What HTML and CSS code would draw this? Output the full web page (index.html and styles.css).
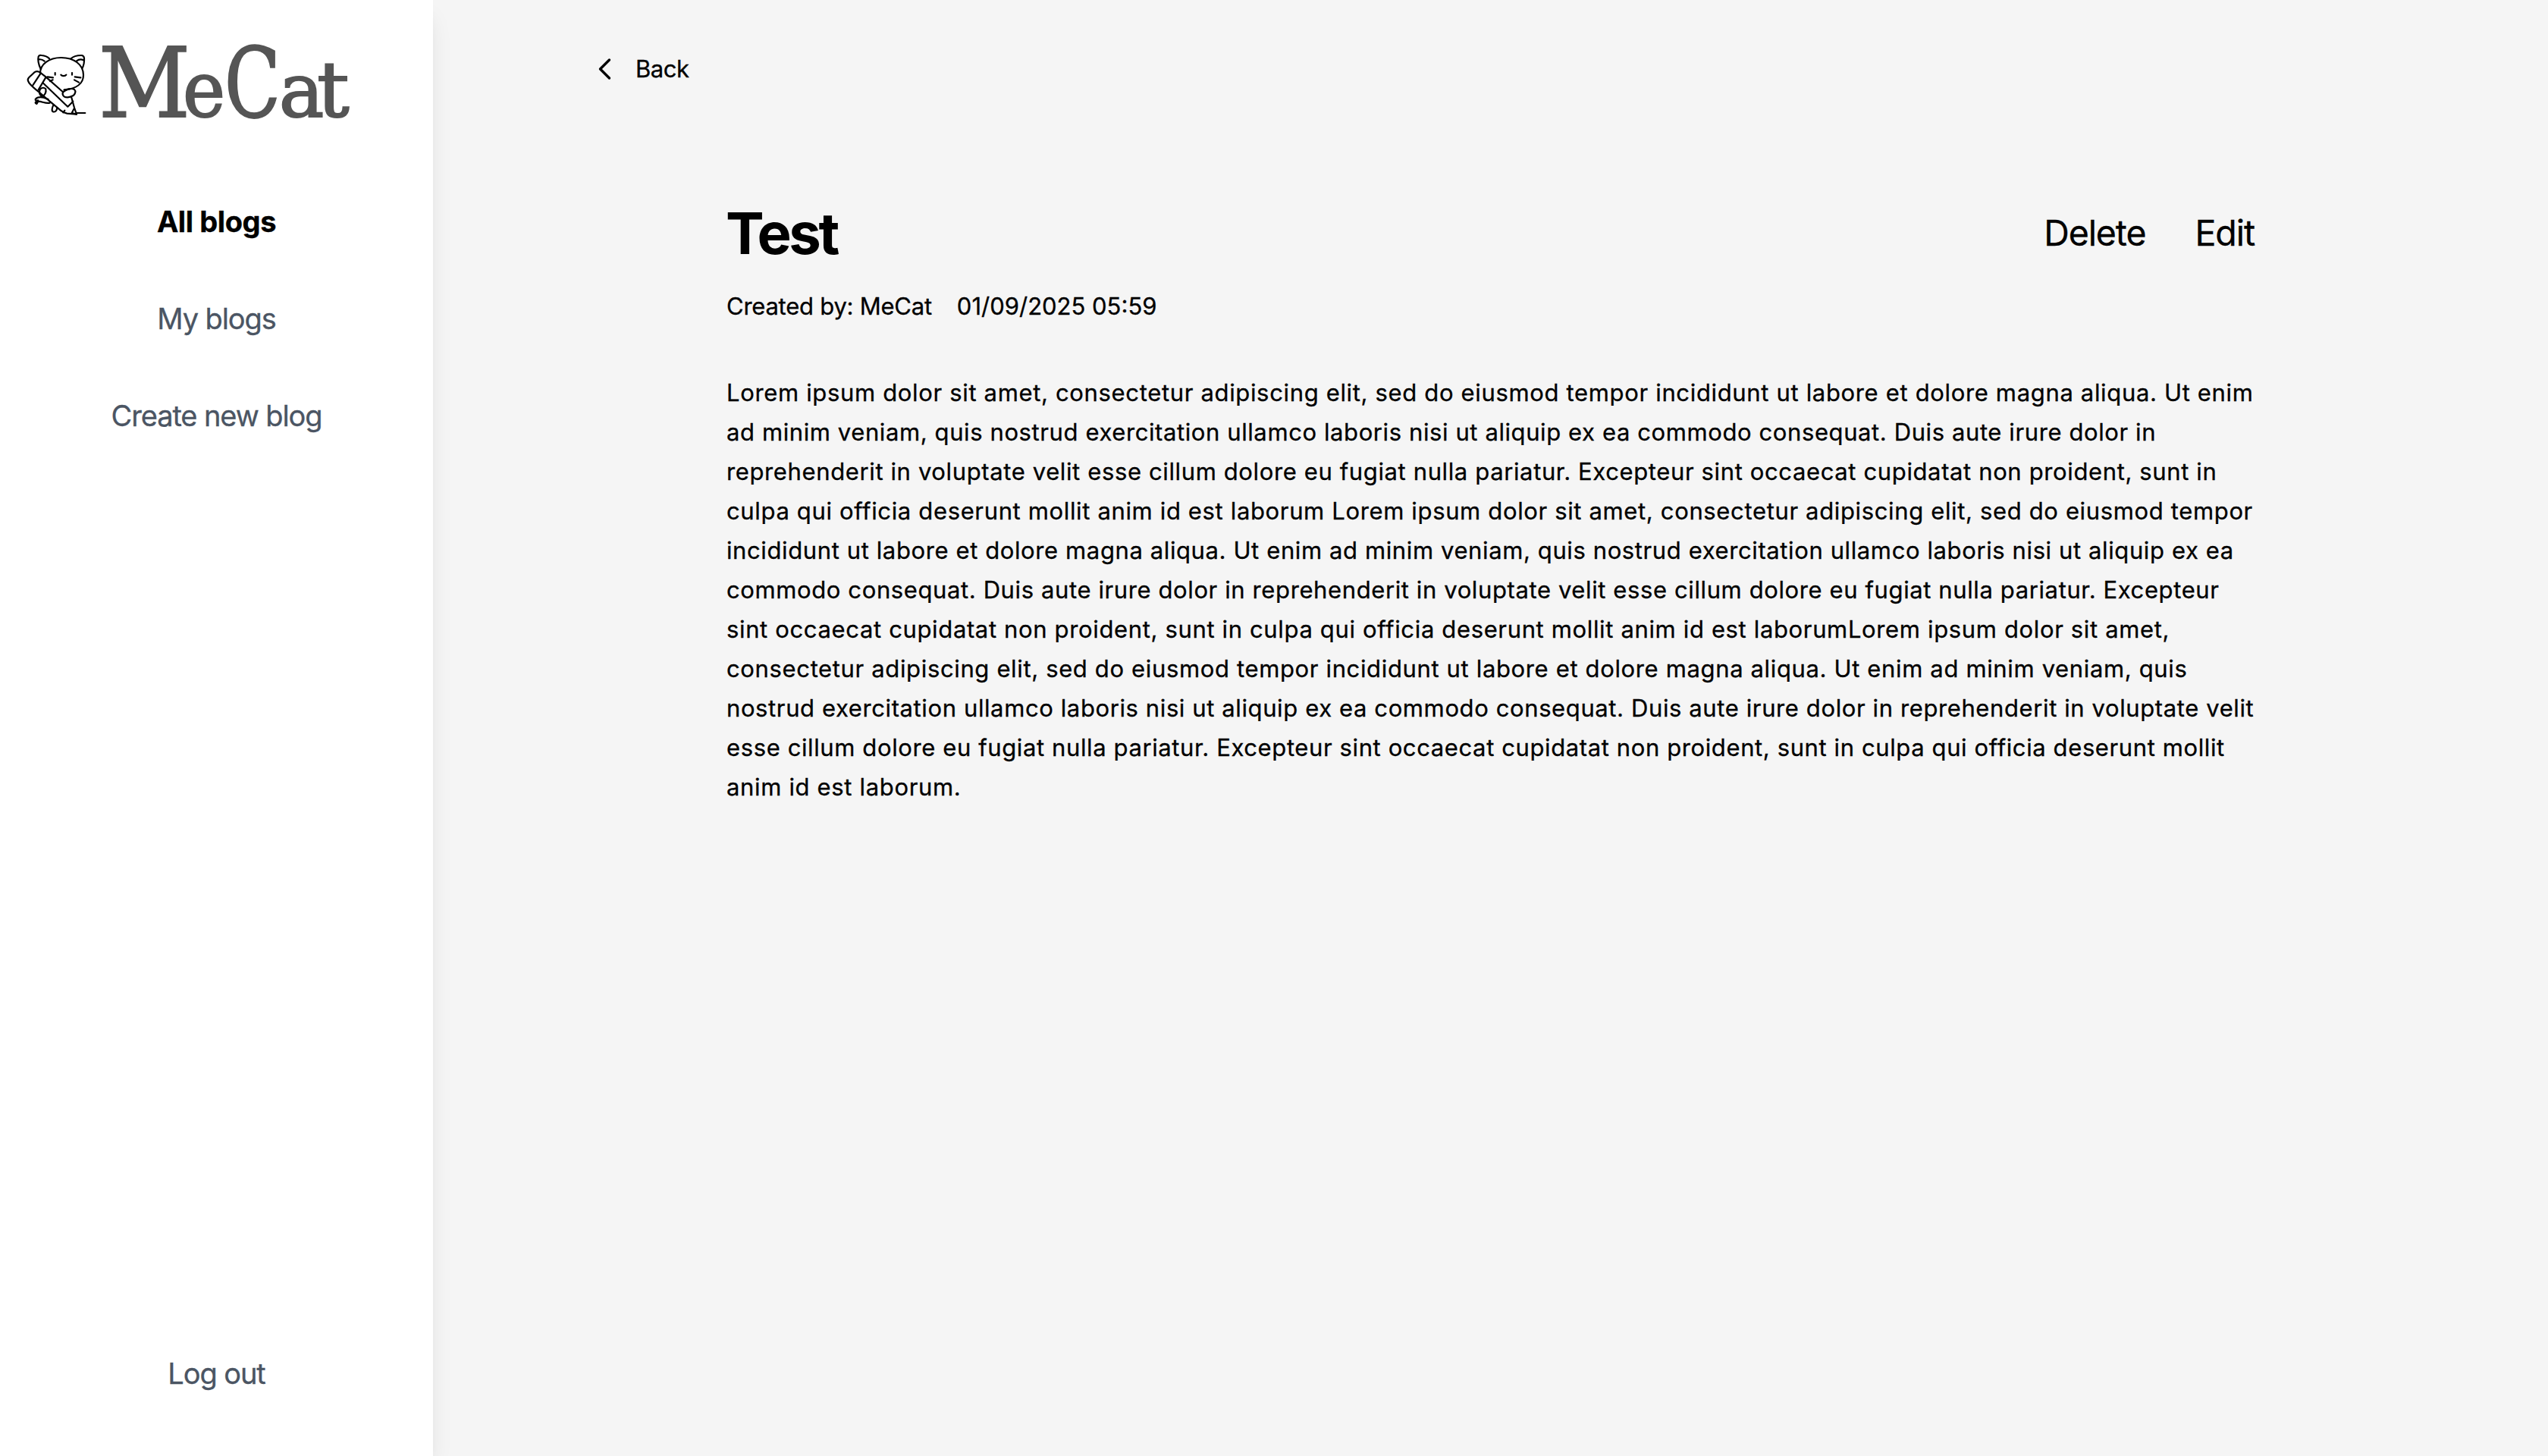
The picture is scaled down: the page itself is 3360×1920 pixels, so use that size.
FILE: index.html
```html
<!DOCTYPE html>
<html lang="en">
<head>
<meta charset="utf-8">
<title>MeCat</title>
<link rel="stylesheet" href="styles.css">
</head>
<body>
<div class="app">
  <aside class="sidebar">
    <div class="brand">
      <svg class="brand-cat" viewBox="0 0 330 360" width="110" height="120" aria-hidden="true">
        <path d="M101 123C92 103 89 86 92 74C94 69 98 68 104 69C117 70 128 74 135 82"/>
        <path d="M95 85C103 84 110 87 116 92"/>
        <path d="M221 82C230 72 245 69 262 69C269 69 272 73 273 80C274 95 272 108 265 121"/>
        <path d="M243 91C251 85 260 83 270 88"/>
        <path d="M99 140C99 104 133 78 182 78C232 78 270 105 270 147C270 179 244 201 194 206"/>
        <path d="M158 138V146M225 138V146"/>
        <path d="M181 146C185 152 198 152 202 146"/>
        <path d="M128 154L150 157M138 171L149 166M236 154L259 157M234 166L252 176"/>
        <path d="M51 170C49 165 51 160 55 156L75 137C82 131 91 131 99 137L122 155L188 213M51 170C55 184 73 198 94 214L112 230L180 287C187 293 194 297 205 299L243 302L234 276L223 236"/>
        <path d="M101 140L70 187M122 155L92 205M112 180L208 272L229 251"/>
        <path d="M98 204C94 216 97 226 106 231C117 229 124 215 121 202C114 195 105 196 98 204Z"/>
        <path d="M190 214C205 204 222 197 234 204C242 211 237 222 230 228C216 236 197 239 190 228C187 223 187 218 190 214Z"/>
        <path d="M194 206L213 202"/>
        <path d="M113 236C100 233 86 235 80 243C79 248 85 250 91 247M137 257C120 261 104 250 91 251C80 250 76 258 85 261C89 257 89 252 91 249M113 236L131 243"/>
        <path d="M151 266C146 277 143 289 150 292C161 295 165 285 166 276"/>
        <path d="M196 287L190 295M243 302L224 297L233 280M243 297H277"/>
      </svg>
      <div class="wordmark"><span class="glyph glyph-m">M</span><span class="glyph glyph-e">e</span><span class="glyph glyph-c">C</span><span class="glyph glyph-a">a</span><span class="glyph glyph-t">t</span></div>
    </div>
    <nav class="menu">
      <a class="menu-item active">All blogs</a>
      <a class="menu-item">My blogs</a>
      <a class="menu-item">Create new blog</a>
    </nav>
    <a class="menu-item logout">Log out</a>
  </aside>
  <main class="main">
    <a class="back">
      <svg class="back-icon" viewBox="0 0 20 32" width="20" height="32" aria-hidden="true"><path d="M16.5 4L4.5 16L16.5 28"/></svg>
      <span>Back</span>
    </a>
    <article class="post">
      <header class="post-head">
        <h1 class="post-title">Test</h1>
        <div class="actions"><a>Delete</a><a>Edit</a></div>
      </header>
      <div class="meta"><span class="author">Created by: MeCat</span><span>01/09/2025 05:59</span></div>
      <p class="post-body">
        <span>Lorem ipsum dolor sit amet, consectetur adipiscing elit, sed do eiusmod tempor incididunt ut labore et dolore magna aliqua. Ut enim</span>
        <span>ad minim veniam, quis nostrud exercitation ullamco laboris nisi ut aliquip ex ea commodo consequat. Duis aute irure dolor in</span>
        <span>reprehenderit in voluptate velit esse cillum dolore eu fugiat nulla pariatur. Excepteur sint occaecat cupidatat non proident, sunt in</span>
        <span>culpa qui officia deserunt mollit anim id est laborum Lorem ipsum dolor sit amet, consectetur adipiscing elit, sed do eiusmod tempor</span>
        <span>incididunt ut labore et dolore magna aliqua. Ut enim ad minim veniam, quis nostrud exercitation ullamco laboris nisi ut aliquip ex ea</span>
        <span>commodo consequat. Duis aute irure dolor in reprehenderit in voluptate velit esse cillum dolore eu fugiat nulla pariatur. Excepteur</span>
        <span>sint occaecat cupidatat non proident, sunt in culpa qui officia deserunt mollit anim id est laborumLorem ipsum dolor sit amet,</span>
        <span>consectetur adipiscing elit, sed do eiusmod tempor incididunt ut labore et dolore magna aliqua. Ut enim ad minim veniam, quis</span>
        <span>nostrud exercitation ullamco laboris nisi ut aliquip ex ea commodo consequat. Duis aute irure dolor in reprehenderit in voluptate velit</span>
        <span>esse cillum dolore eu fugiat nulla pariatur. Excepteur sint occaecat cupidatat non proident, sunt in culpa qui officia deserunt mollit</span>
        <span>anim id est laborum.</span>
      </p>
    </article>
  </main>
</div>
</body>
</html>
```
FILE: styles.css
```css
* { box-sizing: border-box; }

body {
  margin: 0;
  font-family: Inter, "Liberation Sans", sans-serif;
  font-size: 31px;
  color: #000;
  background: #f5f5f5;
}

.app { display: flex; height: 1920px; }

/* Sidebar */
.sidebar {
  display: flex;
  flex-direction: column;
  flex: none;
  width: 571px;
  padding: 50px 0 81px;
  background: #fff;
  box-shadow: 0 20px 30px -6px rgba(0, 0, 0, .1), 0 8px 12px -8px rgba(0, 0, 0, .1);
  z-index: 1;
}

.brand {
  display: flex;
  height: 120px;
  margin-bottom: 94px;
  padding-left: 20px;
}

.brand-cat {
  flex: none;
  fill: none;
  stroke: #000;
  stroke-width: 6.5;
  stroke-linecap: round;
  stroke-linejoin: round;
}

.wordmark {
  display: flex;
  align-items: baseline;
  height: 120px;
  font-family: "DejaVu Serif", serif;
  line-height: 120px;
  color: #555;
  -webkit-text-stroke: 2px #555;
  stroke-linejoin: round;
}

.glyph { flex: none; transform-origin: 0 50%; }
.glyph-m { width: 110.8px; font-size: 127px; transform: scaleX(.93); }
.glyph-e { width: 55px; font-size: 102px; transform: scaleX(.93); }
.glyph-c { width: 72px; font-size: 127px; transform: scaleX(.76); }
.glyph-a { width: 50px; font-size: 100px; }
.glyph-t { width: 50px; font-size: 101px; transform: scaleX(1.05); }

.menu {
  display: flex;
  flex-direction: column;
  align-items: center;
  gap: 72px;
}

.menu-item {
  font-size: 38px;
  line-height: 56px;
  letter-spacing: -1.1px;
  color: #4b5563;
  -webkit-text-stroke: .3px currentColor;
}

.active { font-weight: 700; letter-spacing: -.4px; color: #000; }
.logout { margin-top: auto; align-self: center; }

/* Main column */
.main { flex: 1; padding-top: 67px; }

.back {
  display: flex;
  align-items: center;
  gap: 31px;
  margin-left: 216px;
  line-height: 48px;
  letter-spacing: -.45px;
}

.back-icon {
  fill: none;
  stroke: #000;
  stroke-width: 3.4;
  stroke-linecap: round;
  stroke-linejoin: round;
}

.back,
.meta,
.post-body { -webkit-text-stroke: .3px #000; }

.post { width: 2015px; margin: 152px 0 0 387px; }

.post-head {
  display: flex;
  align-items: center;
  justify-content: space-between;
  height: 80px;
}

.post-title {
  margin: 0 0 0 -1px;
  font-size: 76px;
  line-height: 80px;
  letter-spacing: -3.4px;
}

.actions {
  display: flex;
  gap: 65px;
  font-size: 46.5px;
  line-height: 56px;
  letter-spacing: -1.1px;
  -webkit-text-stroke: .3px #000;
}

.meta {
  display: flex;
  gap: 33px;
  margin-top: 33px;
  line-height: 48px;
}

.author { letter-spacing: -.24px; }

.post-body {
  margin: 64px 0 0;
  line-height: 52px;
  letter-spacing: .61px;
  white-space: nowrap;
}

.post-body span { display: block; }
.post-body span:nth-child(1),
.post-body span:nth-child(11) { letter-spacing: .66px; }
.post-body span:nth-child(2) { letter-spacing: .6px; }
.post-body span:nth-child(3) { letter-spacing: .625px; }
.post-body span:nth-child(4),
.post-body span:nth-child(7),
.post-body span:nth-child(8) { letter-spacing: .645px; }
```
